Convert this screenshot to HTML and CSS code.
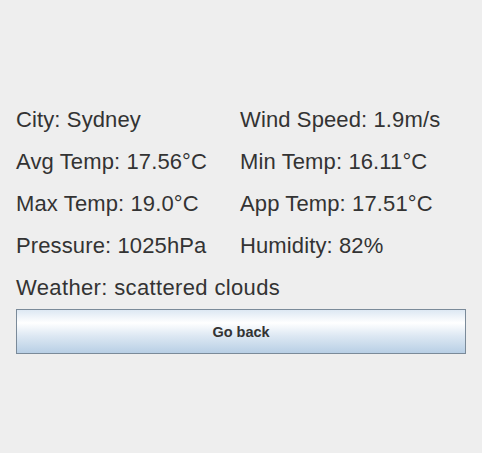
FILE: index.html
```html
<!DOCTYPE html>
<html>
<head>
<meta charset="utf-8">
<link rel="stylesheet" href="styles.css">
</head>
<body>
<div class="panel">
  <div class="grid">
    <div class="label">City: Sydney</div>
    <div class="label">Wind Speed: 1.9m/s</div>
    <div class="label">Avg Temp: 17.56°C</div>
    <div class="label">Min Temp: 16.11°C</div>
    <div class="label">Max Temp: 19.0°C</div>
    <div class="label">App Temp: 17.51°C</div>
    <div class="label">Pressure: 1025hPa</div>
    <div class="label">Humidity: 82%</div>
    <div class="label wide">Weather: scattered clouds</div>
  </div>
  <button class="back">Go back</button>
</div>
</body>
</html>
```
FILE: styles.css
```css
html, body {
  margin: 0;
  padding: 0;
  background: #eeeeee;
}
body {
  width: 482px;
  height: 453px;
  overflow: hidden;
}
.panel {
  padding: 99px 16px 0 16px;
  display: flex;
  flex-direction: column;
}
.grid {
  display: grid;
  grid-template-columns: 224px 1fr;
  grid-auto-rows: 42px;
}
.label {
  font-family: "Liberation Sans", Arial, sans-serif;
  font-size: 22px;
  line-height: 42px;
  letter-spacing: 0.12px;
  color: #333333;
  white-space: nowrap;
}
.wide {
  grid-column: 1 / span 2;
  letter-spacing: 0.36px;
}
.back {
  margin: 0;
  height: 45px;
  width: 450px;
  border: 1px solid #7a8a99;
  border-radius: 0;
  background: linear-gradient(to bottom, #dde8f3 0%, #ffffff 30%, #dde8f3 60%, #b8cfe5 100%);
  font-family: "Liberation Sans", Arial, sans-serif;
  font-weight: bold;
  font-size: 14.5px;
  color: #333333;
  padding: 0;
}
```
